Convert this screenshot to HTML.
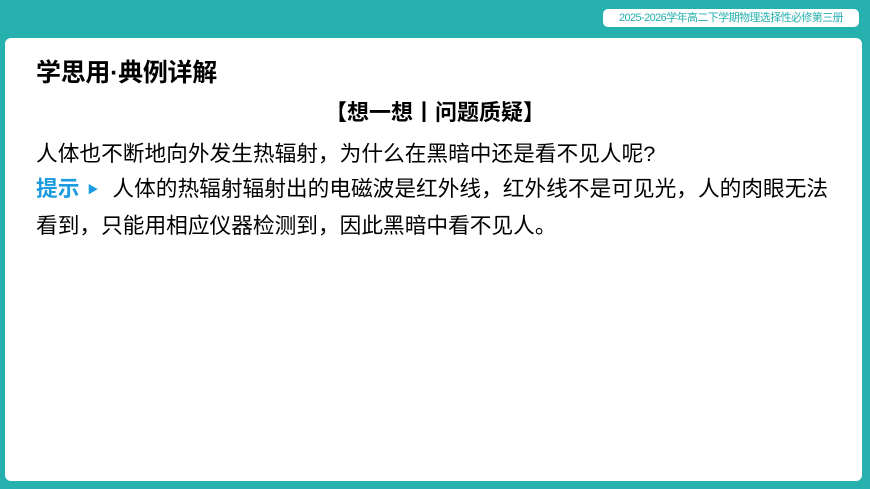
<!DOCTYPE html><html><head><meta charset="utf-8"><style>
body{margin:0;width:870px;height:489px;background:#26b0ae;position:relative;overflow:hidden;font-family:"Liberation Sans","Noto Sans CJK SC",sans-serif}
.tag{position:absolute;left:603px;top:9px;width:256px;height:18px;background:#fff;border-radius:5px;color:#26b0ae;font-size:11px;line-height:18px;text-align:center;letter-spacing:-0.6px}
.card{position:absolute;left:5px;top:38px;width:857px;height:443px;background:#fff;border-radius:6px}
.t{position:absolute;left:36px;top:53px;font-size:25px;font-weight:bold;color:#000;letter-spacing:-0.3px}
.h{position:absolute;left:0;width:870px;top:95px;text-align:center;font-size:22px;font-weight:bold;color:#000}
.p{position:absolute;left:36px;top:136px;width:830px;font-size:21.7px;line-height:35px;color:#000;white-space:nowrap}
.b{color:#1b9be0;font-weight:bold}
</style></head><body>
<div class="tag">2025-2026学年高二下学期物理选择性必修第三册</div>
<div class="card"></div>
<div class="t">学思用·典例详解</div>
<div class="h">【想一想丨问题质疑】</div>
<div class="p">人体也不断地向外发生热辐射，为什么在黑暗中还是看不见人呢?<br><span class="b">提示</span><span style="color:#1b9be0;font-size:11px;margin:0 14px 0 8px;vertical-align:3px">▶</span>人体的热辐射辐射出的电磁波是红外线，红外线不是可见光，人的肉眼无法<br>看到，只能用相应仪器检测到，因此黑暗中看不见人。</div>
</body></html>
